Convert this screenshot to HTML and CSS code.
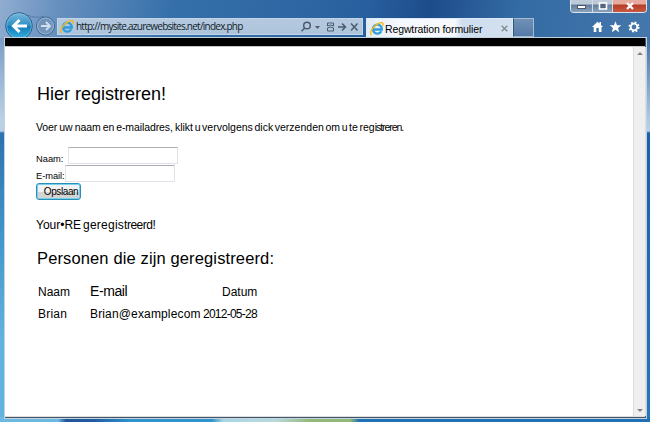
FILE: index.html
```html
<!DOCTYPE html>
<html lang="nl">
<head>
<meta charset="utf-8">
<title>Registratieformulier</title>
<link rel="stylesheet" href="styles.css">
</head>
<body>
<div class="window">
  <header class="chrome">
    <svg class="nav" width="52" height="26" viewBox="0 0 52 26">
      <defs><linearGradient id="blue" x2="0" y2="1"><stop stop-color="#7ab9dc"/><stop offset=".48" stop-color="#2f8fc5"/><stop offset=".52" stop-color="#147bb5"/><stop offset="1" stop-color="#35b4e5"/></linearGradient></defs>
      <path d="M22 3Q32 7 39 4" fill="none" stroke="#587fa9"/>
      <circle cx="14" cy="14" r="13.3" fill="url(#blue)" stroke="#2c5f8f"/>
      <circle cx="14" cy="14" r="12.3" fill="none" stroke="#8cc4e0" stroke-opacity=".6"/>
      <path d="M22 14H9M14.500 8L8.500 14L14.500 20" fill="none" stroke="#fff" stroke-width="3"/>
      <circle cx="40.500" cy="14" r="9" fill="#7095bc" stroke="#3f6690"/>
      <circle cx="40.500" cy="14" r="8" fill="none" stroke="#9ab4cf"/>
      <path d="M36 14H44M41 10L45 14L41 18" fill="none" stroke="#d3deea" stroke-width="1.800"/>
    </svg>
    <div class="address">
      <svg class="ie" width="14" height="14" viewBox="0 0 14 14"><path d="M11.300 9.200A4.500 4.500 0 1 1 11.800 7.500H4" fill="none" stroke="#2f9bd8" stroke-width="2.300"/><path d="M1.500 13C-1 11 3 4 8 1.700S13.500 1 12.500 4" fill="none" stroke="#f3bb20" stroke-width="1.500"/></svg>
      <span class="url">http://mysite.azurewebsites.net/index.php</span>
      <svg class="tools" width="60" height="16" viewBox="0 0 60 16" fill="none" stroke="#4c5a6b" stroke-width="1.500">
        <circle cx="7" cy="6.500" r="3.300"/><path d="M4.700 9L1.500 12.200"/>
        <path d="M15 7H20L17.500 10Z" fill="#4c5a6b" stroke="none"/>
        <path d="M27.500 7V4H33.500V7L30.500 6ZM27.500 9L30.500 8L33.500 9V12H27.500Z" stroke-width="1"/>
        <path d="M38 8H45M42 4.500L45.500 8L42 11.500"/>
        <path d="M51 4.500L57.500 11.500M57.500 4.500L51 11.500"/>
      </svg>
    </div>
    <div class="tab">
      <svg class="ie" width="14" height="14" viewBox="0 0 14 14"><path d="M11.300 9.200A4.500 4.500 0 1 1 11.800 7.500H4" fill="none" stroke="#2f9bd8" stroke-width="2.300"/><path d="M1.500 13C-1 11 3 4 8 1.700S13.500 1 12.500 4" fill="none" stroke="#f3bb20" stroke-width="1.500"/></svg>
      <span class="tab-title">Regwtration formulier</span>
      <svg class="tab-close" width="7" height="7" viewBox="0 0 7 7"><path d="M.7 .7L6.300 6.300M6.300 .7L.7 6.300" stroke="#858d96" stroke-width="1.500"/></svg>
    </div>
    <div class="new-tab"></div>
    <div class="right">
      <div class="controls">
        <div class="control"><svg width="10" height="8"><rect x=".5" y="3.500" width="8" height="3" fill="#fff" stroke="#4c5769"/></svg></div>
        <div class="control mid"><svg width="10" height="8"><rect x="1.500" y="1" width="7" height="6" fill="#50657f" stroke="#fff" stroke-width="1.600"/></svg></div>
        <div class="control close"><svg width="10" height="8"><path d="M2 1L8 7M8 1L2 7" stroke="#fff" stroke-width="2.200"/></svg></div>
      </div>
      <svg class="actions" width="50" height="12" viewBox="0 0 50 12">
        <path d="M0 6L5.500 .8L7.500 2.500V1H9V4L11 6H9.500V11H6.800V7H4.300V11H1.700V6Z" fill="#fff"/>
        <path d="M23.500 .3L25 4.300H29.300L26 7L27.200 11.300L23.500 8.800L19.800 11.300L21 7L17.700 4.300H22Z" fill="#fff"/>
        <circle cx="42" cy="6" r="3.300" fill="none" stroke="#fff" stroke-width="1.800"/>
        <circle cx="42" cy="6" r="4.700" fill="none" stroke="#fff" stroke-width="1.700" stroke-dasharray="1.850 1.840"/>
      </svg>
    </div>
  </header>
  <div class="viewport">
    <div class="band"></div>
    <div class="page">
      <main class="content">
        <h1>Hier registreren!</h1>
        <p class="intro"><span class="i1">Voer uw naam en e-mailadres, </span><span class="i2">klikt u vervolgens dick verzenden om u te </span><span class="i3">reg</span><span class="i4">istreren.</span></p>
        <form>
          <div class="field"><label for="naam">Naam:</label><input id="naam"></div>
          <div class="field"><label class="mail-label" for="mail">E-mail:</label><input id="mail"></div>
          <button type="button">Opslaan</button>
        </form>
        <p class="status"><span class="s1">Your•RE </span><span class="s2">geregis</span><span class="s3">treerd!</span></p>
        <h2>Personen die zijn geregistreerd:</h2>
        <div class="row"><span>Naam</span><span class="email">E-mail</span><span class="datum">Datum</span></div>
        <div class="row"><span class="name">Brian</span><span class="mail">Brian@examplecom</span><span class="date">2012-05-28</span></div>
      </main>
      <div class="scrollbar">
        <svg width="6" height="3"><path d="M0 3L3 0L6 3Z" fill="#858585"/></svg>
        <svg width="6" height="3"><path d="M0 0L3 3L6 0Z" fill="#858585"/></svg>
      </div>
    </div>
  </div>
</div>
</body>
</html>
```
FILE: styles.css
```css
* { box-sizing: border-box; }
body { margin: 0; color: #000; font-family: "Liberation Sans", Arial, sans-serif; }
.window {
  width: 650px; height: 422px; overflow: hidden;
  display: flex; flex-direction: column; padding: 0 3px 3px 4px;
  background:
    linear-gradient(90deg, #6cb9e2 0 58px, #225497 66px, #205da5 95px, #3093cc 130px 212px, #a9d6e5 223px, #b7dadd 275px, #94b978 310px 350px, #1f70b5 359px) 0 100% / 650px 5px no-repeat,
    linear-gradient(#7b9dc4, #b9d0e5 80px 93px, #2a72b0 95px, #3f93c9 190px, #60b3de 300px) 0 38px / 5px 384px no-repeat,
    linear-gradient(#426fa4, #a5c3de 75px, #b5d4eb 93px, #1960a8 95px, #2a74ba) 100% 38px / 4px 384px no-repeat,
    linear-gradient(100deg, #90add0 0, #668fbe 60px, #3670aa 170px, #2d66a2 300px, #28609f 360px, #1e4c8b 425px, #336ba4 510px, #4577ab 650px);
}
.chrome { height: 37px; flex: none; display: flex; align-items: flex-start; }
.nav { margin: 12px 0 0 1px; flex: none; }
.address { flex: 0 0 306px; height: 17px; margin-top: 18px; display: flex; align-items: center; padding: 0 2px; background: linear-gradient(#b4c9df, #adc5dc); border: 1px solid #c1d5e7; }
.ie { flex: none; }
.url { font: 10px/15px "Open Sans", sans-serif; letter-spacing: -0.760px; margin-left: 2px; white-space: nowrap; color: #111c28; }
.tools { margin-left: auto; flex: none; }
.tab { width: 147px; flex: none; height: 20px; margin: 18px 0 0 3px; padding: 0 4px 0 3px; display: flex; align-items: center; background: linear-gradient(90deg, #e1ebf6, #f5f8fc 30px 88px, #cfdeef 95px, #d2e0ef); border: 1px solid #dceaf6; border-bottom: 0; }
.tab-title { font-size: 10.500px; line-height: 16px; letter-spacing: -0.120px; margin-left: 1px; white-space: nowrap; }
.tab-close { margin-left: auto; }
.new-tab { width: 21px; height: 19px; margin-top: 18px; background: linear-gradient(#7190b3, #547aa8); border: 1px solid #a2bad2; border-left-color: #32577d; }
.right { margin-left: auto; display: flex; flex-direction: column; align-items: flex-end; }
.controls { width: 77px; height: 13px; display: flex; border: 1px solid #dae4ed; border-top: 0; border-radius: 0 0 4px 4px; overflow: hidden; }
.control { width: 21px; display: flex; align-items: center; justify-content: center; background: linear-gradient(#bdcad8 0 4px, #627e9e 5px, #8aa3bd); }
.mid { border: solid #d3dde8; border-width: 0 1px; }
.close { flex: 1; background: linear-gradient(#e7aa9e 0 4px, #b63c27 5px, #ca5940); }
.actions { margin: 8px 5px 0 0; }
.viewport { flex: 1; min-height: 0; display: flex; flex-direction: column; border: 1px solid #526a80; border-top-color: #9ac9ec; border-right: 2px solid #375675; border-bottom: 2px solid #44576a; outline: 1px solid #c1d3df; outline-offset: -1px; }
.band { height: 8px; flex: none; background: #000; }
.page { flex: 1; min-height: 0; display: flex; background: #fff; border-top: 1px solid #c6c6c6; border-bottom: 1px solid #ddd; }
.content { flex: 1; padding: 36px 0 0 31px; white-space: nowrap; }
h1 { font-size: 18px; line-height: 22px; font-weight: 400; margin: 0 0 0 1px; }
.intro { font-size: 10.500px; line-height: 14px; margin: 15px 0 13px; white-space: pre; }
.i1 { letter-spacing: -0.1px; word-spacing: -0.700px; }
.i2 { word-spacing: -1.300px; }
.i4 { letter-spacing: -1.050px; }
.field { height: 18px; display: flex; align-items: flex-start; }
label { width: 32px; font-size: 9.300px; line-height: 12px; margin-top: 6px; flex: none; }
.mail-label { width: 29px; margin-top: 5px; letter-spacing: -0.050px; }
input { width: 110px; height: 17px; margin: 0; padding: 0; border: 1px solid #e1e3ea; border-top-color: #abadb3; }
button { display: block; width: 45px; height: 17px; padding: 0 0 0 5px; border: 1px solid #278fb5; border-radius: 3px; box-shadow: inset 0 0 0 1px #79d0ed; background: linear-gradient(#f2f2f2 50%, #d4d4d4 50%); color: #000; font: 10px/15px "Liberation Sans", Arial, sans-serif; letter-spacing: -0.400px; }
.status { font-size: 12px; line-height: 16px; margin: 17px 0 0; white-space: pre; }
.s1 { word-spacing: -1.500px; }
.s2 { letter-spacing: 0.250px; }
.s3 { letter-spacing: -0.500px; }
h2 { font-size: 16.500px; line-height: 22px; letter-spacing: 0.130px; font-weight: 400; margin: 14px 0 15px 1px; }
.row { display: grid; grid-template-columns: 52px 113px 60px; margin-left: 2px; font-size: 12px; line-height: 16px; height: 22px; }
.email { font-size: 14px; letter-spacing: -0.400px; margin-top: -1px; }
.datum { margin-left: 19px; }
.name { letter-spacing: 0.200px; }
.mail { letter-spacing: 0.150px; }
.date { letter-spacing: -0.750px; }
.scrollbar { width: 13px; margin-right: -1px; flex: none; display: flex; flex-direction: column; align-items: center; justify-content: space-between; padding: 5px 0 4px; background: #efefef; border: solid #ddd; border-width: 0 1px; }
```
